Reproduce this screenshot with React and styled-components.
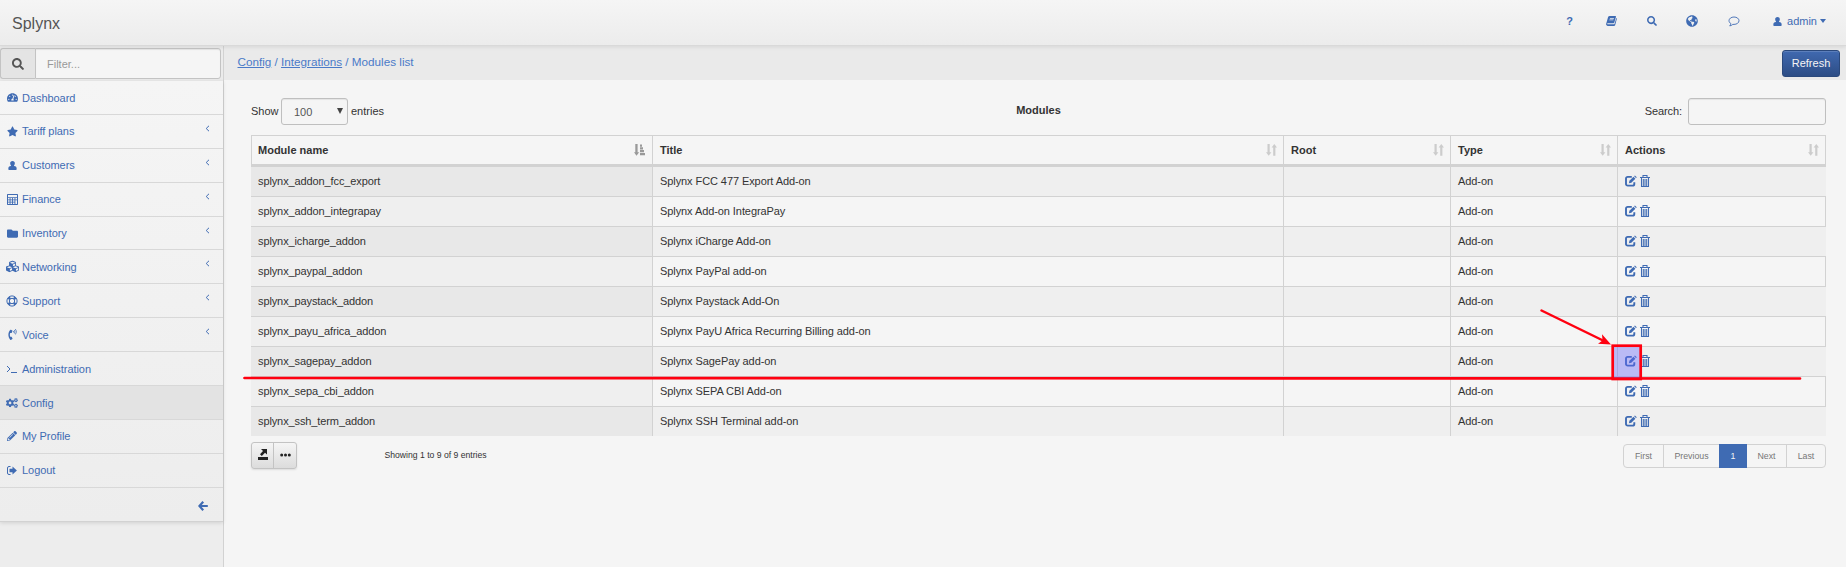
import React from 'react';
import styled, { createGlobalStyle } from 'styled-components';
import {
  FaTachometerAlt, FaStar, FaFolder, FaCubes, FaPhoneVolume, FaCogs,
  FaPencilAlt, FaSearch, FaGlobeAmericas,
} from 'react-icons/fa';

const blue = '#3f6bb3';
const line = '#d2d2d2';
const markRed = '#ff0010';

const GlobalStyle = createGlobalStyle`
  * { box-sizing: border-box; }
  body {
    margin: 0;
    background: #f5f5f5;
    color: #333;
    font: 11px/16px "Liberation Sans", Arial, sans-serif;
  }
  svg { display: block; flex: none; }
  input, button { font: inherit; }
`;

const Page = styled.div`
  position: relative;
  height: 567px;
  display: flex;
  flex-direction: column;
  overflow: hidden;
`;

const TopBar = styled.header`
  z-index: 1;
  height: 46px;
  flex: none;
  display: flex;
  align-items: center;
  justify-content: space-between;
  padding: 0 20px 3px 12px;
  background: linear-gradient(#f5f5f5, #ececec);
  border-bottom: 1px solid #d9d9d9;
  box-shadow: 0 1px 4px rgba(0, 0, 0, 0.09);
`;

const Brand = styled.div`
  font-size: 16px;
  line-height: 20px;
  color: #555;
  padding-top: 5px;
`;

const TopLinks = styled.nav`
  display: flex;
  align-items: center;
  color: ${blue};
`;

const TopLink = styled.a`
  width: ${(p) => p.$w}px;
  height: 14px;
  display: flex;
  align-items: center;
  justify-content: center;
  font-weight: bold;
`;

const UserMenu = styled.a`
  display: flex;
  align-items: center;
  padding-left: 18px;
`;

const UserName = styled.span`
  margin: 0 3px 0 5px;
`;

const Caret = styled.span`
  border: 3.5px solid transparent;
  border-top: 4px solid ${blue};
  border-bottom: 0;
`;

const Body = styled.div`
  flex: 1;
  display: flex;
`;

const Sidebar = styled.aside`
  width: 224px;
  flex: none;
  background: #ededed;
  border-right: 1px solid ${line};
`;

const FilterBar = styled.div`
  height: 35px;
  padding: 2px 2px 2px 0;
  background: #ebebeb;
  display: flex;
`;

const FilterIcon = styled.span`
  width: 35px;
  height: 31px;
  display: flex;
  align-items: center;
  justify-content: center;
  color: #555;
  background: #e4e4e4;
  border: 1px solid #c3c3c3;
  border-right: 0;
  border-radius: 3px 0 0 3px;
`;

const FilterInput = styled.input`
  flex: 1;
  min-width: 0;
  height: 31px;
  padding: 0 11px;
  border: 1px solid #c3c3c3;
  border-radius: 0 3px 3px 0;
  background: #f5f5f5;
  outline: 0;
  box-shadow: inset 0 1px 1px rgba(0, 0, 0, 0.07);
  &::placeholder { color: #999; }
`;

const Menu = styled.div`
  background: linear-gradient(#f5f5f5, #ededed);
  box-shadow: 0 1px 4px rgba(0, 0, 0, 0.12);
  border-bottom: 1px solid ${line};
`;

const MenuItem = styled.a`
  height: 33.9px;
  display: flex;
  align-items: center;
  padding: 0.2px 13px 0 5px;
  color: ${blue};
  background: ${(p) => (p.$active ? '#e3e3e3' : 'transparent')};
  border-bottom: 1px solid #d8d8d8;
`;

const MenuIcon = styled.span`
  width: 14px;
  height: 14px;
  margin-right: 3px;
  display: flex;
  align-items: center;
  justify-content: center;
`;

const MenuLabel = styled.span`
  flex: 1;
  letter-spacing: -0.05px;
`;

const Chevron = styled.span`
  padding-bottom: 6px;
`;

const Collapse = styled.a`
  height: 33px;
  display: flex;
  align-items: center;
  justify-content: flex-end;
  padding: 3px 15px 0 0;
  color: ${blue};
`;

const Main = styled.main`
  flex: 1;
  min-width: 0;
`;

const PageHead = styled.div`
  height: 34px;
  display: flex;
  align-items: center;
  justify-content: space-between;
  padding: 0 6px 0 13.5px;
  background: #eaeaea;
`;

const Crumbs = styled.div`
  color: #4a7ac8;
  font-size: 11.7px;
  padding-bottom: 3px;
  a { text-decoration: underline; }
`;

const Refresh = styled.button`
  width: 58px;
  height: 27px;
  padding: 0;
  color: #f5f5f5;
  background: linear-gradient(#4069b0, #2d4d85);
  border: 1px solid #2b497c;
  border-radius: 3px;
  box-shadow: inset 0 1px 0 rgba(255, 255, 255, 0.15);
`;

const Content = styled.section`
  padding: 18px 20px 0 27px;
`;

const Tools = styled.div`
  height: 27px;
  display: grid;
  grid-template-columns: 1fr auto 1fr;
  align-items: center;
  margin-bottom: 10px;
`;

const Length = styled.label`
  display: flex;
  align-items: center;
  gap: 3px;
`;

const LengthText = styled.span`
  padding-bottom: 1px;
  &:first-child { width: 27px; }
`;

const SelectBox = styled.span`
  width: 67px;
  height: 27px;
  display: flex;
  align-items: center;
  justify-content: space-between;
  padding: 1px 4px 0 12px;
  color: #555;
  border: 1px solid #bfbfbf;
  border-radius: 3px;
  box-shadow: inset 0 1px 1px rgba(0, 0, 0, 0.07);
`;

const SelectArrow = styled.span`
  border: 3.5px solid transparent;
  border-top: 6px solid #444;
  border-bottom: 0;
  margin-bottom: 3px;
`;

const TableTitle = styled.strong`
  padding-bottom: 3px;
`;

const Search = styled.label`
  display: flex;
  align-items: center;
  justify-content: flex-end;
  gap: 6px;
`;

const SearchText = styled.span`
  padding-bottom: 1px;
  letter-spacing: -0.1px;
`;

const SearchInput = styled.input`
  width: 138px;
  height: 27px;
  border: 1px solid #bfbfbf;
  border-radius: 3px;
  background: #f5f5f5;
  box-shadow: inset 0 1px 1px rgba(0, 0, 0, 0.07);
`;

const Table = styled.table`
  width: 1575px;
  table-layout: fixed;
  border-collapse: separate;
  border-spacing: 0;
`;

const Th = styled.th`
  width: ${(p) => p.$w}px;
  height: 32px;
  padding: 0 6px 0 7px;
  text-align: left;
  border: 1px solid ${line};
  border-right: 0;
  border-bottom-width: 3px;
  &:first-child { padding: 0 7px 0 6px; }
  &:last-child { border-right: 1px solid ${line}; }
`;

const ThInner = styled.div`
  display: flex;
  align-items: center;
  justify-content: space-between;
  color: #333;
`;

const ThLabel = styled.span`
  padding-bottom: 1px;
`;

const Td = styled.td`
  height: 30px;
  padding: 0 7px 1px 7px;
  letter-spacing: -0.08px;
  border-left: 1px solid ${line};
  border-bottom: 1px solid ${line};
  &:first-child { border-left: 0; letter-spacing: -0.11px; }
`;

const Tr = styled.tr`
  background: #f5f5f5;
  td:first-child { background: #efefef; }
  td:last-child { border-right: 1px solid ${line}; }
  &:nth-child(odd) { background: #efefef; }
  &:nth-child(odd) td:first-child { background: #e8e8e8; }
  &:nth-child(odd) td:last-child { border-right: 0; }
  &:last-child td { border-bottom: 0; height: 29px; }
`;

const Actions = styled.div`
  display: flex;
  align-items: center;
  gap: 3px;
  color: ${blue};
`;

const Foot = styled.div`
  display: flex;
  align-items: flex-start;
  padding-top: 6px;
`;

const ButtonGroup = styled.div`
  display: flex;
  height: 27px;
  border: 1px solid #c3c3c3;
  border-radius: 3px;
  background: linear-gradient(#f5f5f5, #dcdcdc);
  box-shadow: 0 1px 2px rgba(0, 0, 0, 0.1);
`;

const ToolButton = styled.button`
  width: ${(p) => p.$w}px;
  padding: 0 0 2px;
  border: 0;
  background: transparent;
  display: flex;
  align-items: center;
  justify-content: center;
  & + & { border-left: 1px solid #c3c3c3; }
`;

const Info = styled.div`
  flex: 1;
  margin: 5px 0 0 87.5px;
  font-size: 8.65px;
`;

const Pager = styled.div`
  display: flex;
  height: 24px;
  margin-top: 2px;
  border: 1px solid ${line};
  border-radius: 4px;
  font-size: 8.8px;
  color: #777;
`;

const PageLink = styled.a`
  width: ${(p) => p.$w}px;
  display: flex;
  align-items: center;
  justify-content: center;
  margin: ${(p) => (p.$active ? '-1px 0' : '0')};
  color: ${(p) => (p.$active ? '#f5f5f5' : 'inherit')};
  background: ${(p) => (p.$active ? blue : 'transparent')};
  border-right: ${(p) => (p.$divider ? `1px solid ${line}` : '0')};
`;

const Markup = styled.svg`
  position: absolute;
  inset: 0;
  z-index: 2;
  pointer-events: none;
`;

const UserIcon = ({ size = 10 }) => (
  <svg width={size} height={size} viewBox="0 0 10 10" fill="currentColor">
    <path d="M5 0C3.300 0 2.400 1 2.400 2.600c0 1 .3 1.900.9 2.500v.4C1.200 5.900.4 6.700.4 8v1.300c0 .4.300.7.700.7h7.800c.4 0 .7-.3.7-.7V8C9.600 6.700 8.800 5.900 6.700 5.500v-.4c.6-.6.9-1.500.9-2.500C7.600 1 6.700 0 5 0z" />
  </svg>
);

const CalculatorIcon = () => (
  <svg width="11" height="11" viewBox="0 0 11 11" fill="currentColor">
    <path fillRule="evenodd" d="M.7 0h9.600c.4 0 .7.3.7.700v9.600c0 .4-.3.700-.7.700H.7c-.4 0-.7-.3-.7-.7V.7C0 .3.3 0 .7 0zM1 1v2.200h9V1zM1 4v1.500h1.600V4zm2.500 0v1.500h1.600V4zM6 4v1.500h1.500V4zm2.400 0v1.500H10V4zM1 6.300v1.400h1.600V6.300zm2.500 0v1.400h1.600V6.300zM6 6.300v1.400h1.500V6.300zm2.400 0V10H10V6.300zM1 8.600V10h1.600V8.600zm2.500 0V10h1.600V8.600zM6 8.600V10h1.500V8.600z" />
  </svg>
);

const LifeRingIcon = () => (
  <svg width="12" height="12" viewBox="0 0 12 12" fill="none" stroke="currentColor">
    <circle cx="6" cy="6" r="5.100" strokeWidth="1" />
    <circle cx="6" cy="6" r="2.700" strokeWidth="1" />
    <path d="M2.400 2.400l1.700 1.700M9.600 2.400L7.900 4.100M2.400 9.600l1.700-1.700M9.600 9.600L7.900 7.900" strokeWidth="2.600" />
  </svg>
);

const TerminalIcon = () => (
  <svg width="12" height="10" viewBox="0 0 12 10" fill="none" stroke="currentColor" strokeWidth="1">
    <path d="M1 2l3 3-3 3M5 8.500h6" />
  </svg>
);

const SignOutIcon = () => (
  <svg width="10" height="9" viewBox="0 0 10 9" fill="currentColor">
    <path d="M3.500.5H2A1.500 1.500 0 0 0 .5 2v5A1.500 1.500 0 0 0 2 8.500h1.500" fill="none" stroke="currentColor" />
    <path d="M2.500 2.700H5.500V.6L9.900 4.500 5.500 8.400V6.300H2.500z" />
  </svg>
);

const ArrowLeftIcon = () => (
  <svg width="10" height="10" viewBox="0 0 10 10" fill="none" stroke="currentColor" strokeWidth="2.200">
    <path d="M5.200.8L1.400 5l3.800 4.200M1.500 5H9.800" />
  </svg>
);

const ChevronIcon = () => (
  <svg width="5" height="7" viewBox="0 0 5 7" fill="none" stroke="currentColor">
    <path d="M4 .8L1.200 3.500 4 6.200" />
  </svg>
);

const CommentIcon = () => (
  <svg width="12" height="11" viewBox="0 0 12 11" fill="none" stroke="currentColor" strokeWidth=".9">
    <path d="M6 1C3.200 1 1 2.600 1 4.700c0 1.200.7 2.200 1.900 2.900 0 1-.5 1.700-1.200 2.300 1.400-.2 2.400-.7 3.100-1.500H6c2.800 0 5-1.600 5-3.700S8.800 1 6 1z" />
  </svg>
);

const BookIcon = () => (
  <svg width="11" height="10" viewBox="0 0 11 10" fill="currentColor">
    <path fillRule="evenodd" d="M3.600 0h5.700c.5 0 .8.300.7.700L8.300 6.500c-.1.4-.5.700-1 .7H1.700c-.5 0-.6.4-.5.700.1.300.4.400.8.400h5.800c.4 0 .7-.3.8-.6L10.300 2c.5.200.7.500.5 1L9.200 8.900c-.2.600-.700 1.000-1.300 1H1.800C.7 9.900-.1 9 .1 8L2.100 1C2.300.4 2.900 0 3.600 0zM4 2l-.2.700h4L8 2zM3.500 3.600l-.2.700h4l.2-.7z" />
  </svg>
);

const SortIcon = () => (
  <svg width="11" height="12" viewBox="0 0 11 12" fill="#ccc">
    <path d="M1.500 0h2.200v8.300h1.700L2.700 11.800 0 8.300h1.500zM7.200 11.800h2.200V3.500H11L8.300 0 5.600 3.500h1.600z" />
  </svg>
);

const SortAscIcon = () => (
  <svg width="11" height="12" viewBox="0 0 11 12" fill="#999">
    <path d="M1.300 0h2.300v8.300H5.200L2.500 11.800 0 8.300h1.300zM6 .5h2v2.200H6zM6 3.300h3v2.200H6zM6 6.100h4v2.200H6zM6 9h5v2.200H6z" />
  </svg>
);

const EditIcon = () => (
  <svg width="12" height="12" viewBox="0 0 12 12" fill="none" stroke="currentColor">
    <path d="M6.800 1.900H2.700A1.700 1.700 0 0 0 1 3.600v5.300a1.700 1.700 0 0 0 1.700 1.700h4.900a1.700 1.700 0 0 0 1.700-1.700V7.200" strokeWidth="1.900" />
    <path d="M3.900 8.300l.5-2.500L8.500 1.800l1.900 1.900-4.100 4.100z" fill="currentColor" stroke="none" />
    <path d="M9.100 1.200L9.900.4l1.900 1.900-.8.800z" fill="currentColor" stroke="none" />
  </svg>
);

const TrashIcon = () => (
  <svg width="10" height="12" viewBox="0 0 10 12" fill="none" stroke="currentColor">
    <path d="M0 2.500h10M3 2V.5h4V2M1.500 2.500v9h7v-9M3.300 4v7M5 4v7M6.700 4v7" strokeWidth="1.050" />
  </svg>
);

const ExportIcon = () => (
  <svg width="10" height="11" viewBox="0 0 10 11" fill="#222">
    <path d="M0 8h10v3H0zM3 0h6v5.500L7 3.800 3.800 7 2 5.300 5 2z" />
  </svg>
);

const DotsIcon = () => (
  <svg width="11" height="4" viewBox="0 0 11 4" fill="#222">
    <circle cx="1.700" cy="2" r="1.500" /><circle cx="5.500" cy="2" r="1.500" /><circle cx="9.300" cy="2" r="1.500" />
  </svg>
);

const menu = [
  ['Dashboard', <FaTachometerAlt size={11} />],
  ['Tariff plans', <FaStar size={11} />, true],
  ['Customers', <UserIcon size={9} />, true],
  ['Finance', <CalculatorIcon />, true],
  ['Inventory', <FaFolder size={11} />, true],
  ['Networking', <FaCubes size={13} />, true],
  ['Support', <LifeRingIcon />, true],
  ['Voice', <FaPhoneVolume size={11} />, true],
  ['Administration', <TerminalIcon />],
  ['Config', <FaCogs size={12} />],
  ['My Profile', <FaPencilAlt size={10} />],
  ['Logout', <SignOutIcon />],
];

const columns = [['Module name', 401], ['Title', 631], ['Root', 167], ['Type', 167], ['Actions', 209]];

const modules = [
  ['splynx_addon_fcc_export', 'Splynx FCC 477 Export Add-on'],
  ['splynx_addon_integrapay', 'Splynx Add-on IntegraPay'],
  ['splynx_icharge_addon', 'Splynx iCharge Add-on'],
  ['splynx_paypal_addon', 'Splynx PayPal add-on'],
  ['splynx_paystack_addon', 'Splynx Paystack Add-On'],
  ['splynx_payu_africa_addon', 'Splynx PayU Africa Recurring Billing add-on'],
  ['splynx_sagepay_addon', 'Splynx SagePay add-on'],
  ['splynx_sepa_cbi_addon', 'Splynx SEPA CBI Add-on'],
  ['splynx_ssh_term_addon', 'Splynx SSH Terminal add-on'],
];

export default function App() {
  return (
    <Page>
      <GlobalStyle />
      <TopBar>
        <Brand>Splynx</Brand>
        <TopLinks>
          <TopLink $w={41}>?</TopLink>
          <TopLink $w={42}><BookIcon /></TopLink>
          <TopLink $w={39}><FaSearch size={10} /></TopLink>
          <TopLink $w={41}><FaGlobeAmericas size={12} /></TopLink>
          <TopLink $w={43}><CommentIcon /></TopLink>
          <UserMenu>
            <UserIcon size={9} />
            <UserName>admin</UserName>
            <Caret />
          </UserMenu>
        </TopLinks>
      </TopBar>
      <Body>
        <Sidebar>
          <FilterBar>
            <FilterIcon><FaSearch size={12} /></FilterIcon>
            <FilterInput placeholder="Filter..." />
          </FilterBar>
          <Menu>
            {menu.map(([label, icon, nested]) => (
              <MenuItem key={label} $active={label === 'Config'}>
                <MenuIcon>{icon}</MenuIcon>
                <MenuLabel>{label}</MenuLabel>
                {nested && <Chevron><ChevronIcon /></Chevron>}
              </MenuItem>
            ))}
            <Collapse><ArrowLeftIcon /></Collapse>
          </Menu>
        </Sidebar>
        <Main>
          <PageHead>
            <Crumbs><a>Config</a> / <a>Integrations</a> / Modules list</Crumbs>
            <Refresh>Refresh</Refresh>
          </PageHead>
          <Content>
            <Tools>
              <Length>
                <LengthText>Show</LengthText>
                <SelectBox>100<SelectArrow /></SelectBox>
                <LengthText>entries</LengthText>
              </Length>
              <TableTitle>Modules</TableTitle>
              <Search>
                <SearchText>Search:</SearchText>
                <SearchInput />
              </Search>
            </Tools>
            <Table>
              <thead>
                <tr>
                  {columns.map(([name, w], i) => (
                    <Th key={name} $w={w}>
                      <ThInner><ThLabel>{name}</ThLabel>{i === 0 ? <SortAscIcon /> : <SortIcon />}</ThInner>
                    </Th>
                  ))}
                </tr>
              </thead>
              <tbody>
                {modules.map(([name, title]) => (
                  <Tr key={name}>
                    <Td>{name}</Td>
                    <Td>{title}</Td>
                    <Td />
                    <Td>Add-on</Td>
                    <Td><Actions><EditIcon /><TrashIcon /></Actions></Td>
                  </Tr>
                ))}
              </tbody>
            </Table>
            <Foot>
              <ButtonGroup>
                <ToolButton $w={21}><ExportIcon /></ToolButton>
                <ToolButton $w={23}><DotsIcon /></ToolButton>
              </ButtonGroup>
              <Info>Showing 1 to 9 of 9 entries</Info>
              <Pager>
                <PageLink $w={40} $divider>First</PageLink>
                <PageLink $w={55}>Previous</PageLink>
                <PageLink $w={28} $active>1</PageLink>
                <PageLink $w={40} $divider>Next</PageLink>
                <PageLink $w={38}>Last</PageLink>
              </Pager>
            </Foot>
          </Content>
        </Main>
      </Body>
      <Markup width="1846" height="567" viewBox="0 0 1846 567">
        <path d="M244.500 378L1800 378.500" stroke={markRed} strokeWidth="2.700" strokeLinecap="round" />
        <rect x="1612.700" y="345.700" width="28" height="33.300" fill="rgba(100, 100, 255, 0.38)" stroke={markRed} strokeWidth="2.700" />
        <path d="M1541.500 310.500L1602 340" stroke={markRed} strokeWidth="2.500" strokeLinecap="round" />
        <path d="M1611 344.500L1598 343.800l4.500-3.300-.5-6.200z" fill={markRed} />
      </Markup>
    </Page>
  );
}
